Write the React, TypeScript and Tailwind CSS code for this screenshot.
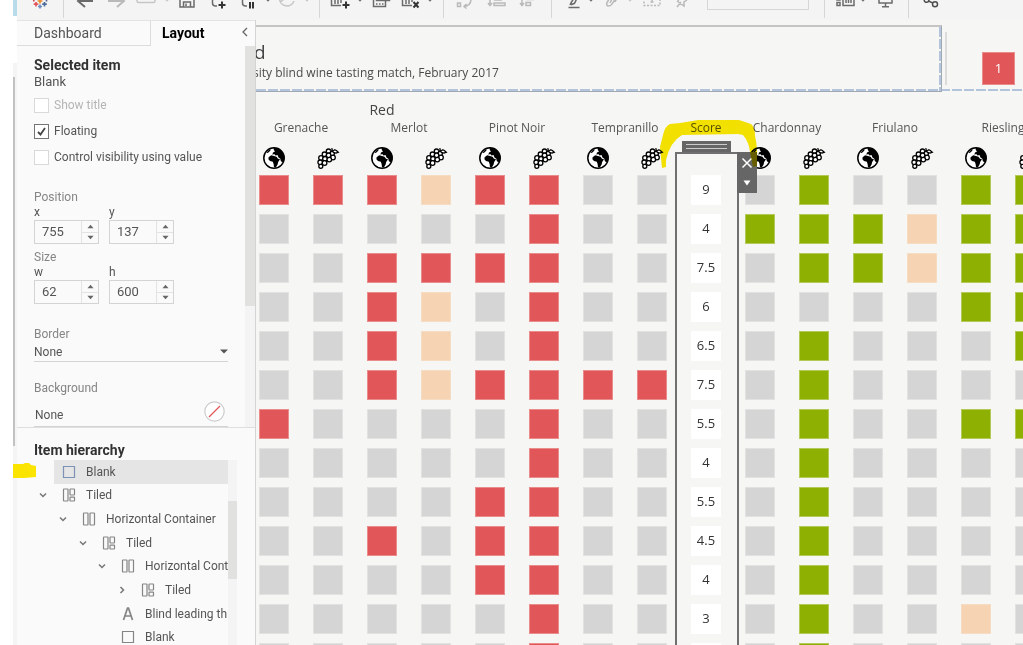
import React from 'react';

const CELL: Record<string, string> = {
  R: 'bg-[#e15759] border-[#ea8b8c]',
  G: 'bg-[#8eb002] border-[#b4ca58]',
  O: 'bg-[#f6d3b2] border-[#f6dcc3]',
  '.': 'bg-[#d5d5d5] border-[#e2e2e1]',
};

const ROWS = [
  { red: 'RRRORR..', score: '9', white: '.G..GG' },
  { red: '.....R..', score: '4', white: 'GGGOGG' },
  { red: '..RRRR..', score: '7.5', white: '.GGOGG' },
  { red: '..RO.R..', score: '6', white: '....GG' },
  { red: '..RO.R..', score: '6.5', white: '.G...G' },
  { red: '..RORRRR', score: '7.5', white: '.G....' },
  { red: 'R....R..', score: '5.5', white: '.G..GG' },
  { red: '.....R..', score: '4', white: '.G....' },
  { red: '....RR..', score: '5.5', white: '.G....' },
  { red: '..R.RR..', score: '4.5', white: '.G....' },
  { red: '....RR..', score: '4', white: '.G....' },
  { red: '.....R..', score: '3', white: '.G..O.' },
  { red: '.....R..', score: '', white: '.G....' },
];

const TREE = [
  { depth: 0, icon: 'blank', label: 'Blank', selected: true },
  { depth: 0, icon: 'tiled', label: 'Tiled', open: true },
  { depth: 1, icon: 'horizontal', label: 'Horizontal Container', open: true },
  { depth: 2, icon: 'tiled', label: 'Tiled', open: true },
  { depth: 3, icon: 'horizontal', label: 'Horizontal Cont', open: true },
  { depth: 4, icon: 'tiled', label: 'Tiled', open: false },
  { depth: 3, icon: 'text', label: 'Blind leading th' },
  { depth: 3, icon: 'blank', label: 'Blank' },
];

const INDENT = ['pl-[22px]', 'pl-[42px]', 'pl-[62px]', 'pl-[81px]', 'pl-[101px]'];

function Globe() {
  return (
    <svg className="mx-auto block" width="24" height="24" viewBox="0 0 24 24" aria-label="Region">
      <circle cx="12" cy="12" r="10.2" fill="#fff" stroke="#000" strokeWidth="1.5" />
      <path d="M11.5 1.800L16 2.500 20 5.500 22.400 10 22.300 14 20.500 16.500 18.800 15 18.300 12.700 16.500 11.500 15.500 9 13.500 9.500 12.200 8 10.300 8.800 11 6.500 13 5.500 11.800 4z" fill="#000" />
      <path d="M6.600 11.300L9.200 9.300 12 10 14.500 10.800 16 12.800 18 13.300 16.200 16 15.600 18.500 13.800 21.500 12 21.200 11.600 18 10.800 15.800 8 15 6.400 13.200z" fill="#000" />
      <path d="M4.500 6.500L7 4l2-.8L8 5 5.800 7z" fill="#000" />
    </svg>
  );
}

function Grapes() {
  return (
    <svg className="mx-auto block" width="24" height="24" viewBox="0 0 24 24" fill="#fff" stroke="#000" strokeWidth="1.3" aria-label="Grape">
      <circle cx="12.500" cy="5.200" r="2.2" />
      <circle cx="8.500" cy="8.300" r="2.3" />
      <circle cx="16.200" cy="7.500" r="2.2" />
      <circle cx="12.600" cy="9.300" r="2.3" />
      <circle cx="5" cy="12" r="2.3" />
      <circle cx="17" cy="11.500" r="2.3" />
      <circle cx="9" cy="12.800" r="2.3" />
      <circle cx="13.300" cy="13.600" r="2.3" />
      <circle cx="4.200" cy="16.300" r="2.3" />
      <circle cx="8.600" cy="17" r="2.3" />
      <circle cx="4.800" cy="20.300" r="2" />
      <path d="M14.500 4.500L16.500 5.500 15.800 2.200M17 5.500q1.500-2.500 3-1.200l2.300 1.900-2.300.9-3-.8" />
    </svg>
  );
}

function Tool({ label, className, children }: { label: string; className: string; children: React.ReactNode }) {
  return (
    <button type="button" aria-label={label} className={`w-5 shrink-0 ${className}`}>
      <svg className="block" width="20" height="20" viewBox="0 0 20 20" fill="none" stroke="currentColor" strokeWidth="1.5">
        {children}
      </svg>
    </button>
  );
}

function Caret({ className }: { className: string }) {
  return (
    <svg className={`block shrink-0 ${className}`} width="6" height="18" viewBox="0 0 6 18" fill="currentColor">
      <path d="M0.500 -1h5L3 1.800z" />
    </svg>
  );
}

function Separator({ className }: { className: string }) {
  return <div className={`h-[18px] w-px shrink-0 bg-[#d6d6d6] ${className}`} />;
}

function Toolbar() {
  return (
    <div className="flex h-5 shrink-0 overflow-hidden bg-[#f4f4f4] text-[#6b6b6b]">
      <svg className="ml-[11px] block shrink-0" width="24" height="18" viewBox="0 0 24 18" fill="none" strokeWidth="1.7">
        <path d="M12 -2v5.500M9.500 1h5" stroke="#eb8a2e" />
        <path d="M8 2v4.500M5.700 4.200h4.600" stroke="#e0565b" />
        <path d="M16.500 2v4.500M14.200 4.200h4.600" stroke="#4d6d9c" />
        <path d="M12 4.500v4M10 6.500h4" stroke="#6c8fc0" />
        <path d="M5.800 -1v2.500" stroke="#d04a5a" />
        <path d="M18.500 -1v2.500" stroke="#5c6692" />
      </svg>
      <Separator className="ml-[11px]" />
      <Tool label="Back" className="ml-[11px]"><path d="M18 1H3M10 7L3 1l7-7" strokeWidth="2" /></Tool>
      <Tool label="Forward" className="ml-3 text-[#b9b9b9]"><path d="M1 1h15M10 7l7-6-7-7" strokeWidth="2" /></Tool>
      <Tool label="Device" className="ml-[9px] text-[#c6c6c6]"><path d="M1 -4v5q0 1.500 1.500 1.500h15Q19 2.500 19 1v-5" /></Tool>
      <Caret className="ml-2 text-[#c6c6c6]" />
      <Tool label="Save" className="ml-[7px]"><path d="M3 -6v13h14V-6M6.500 7V2h7v5M9 3.500V6" /></Tool>
      <Tool label="New data source" className="ml-[11px]">
        <path d="M4.500 -4v7q0 3 3 3h1.500" />
        <path d="M14 1.500v7M10.500 5h7" stroke="#333" strokeWidth="2" />
      </Tool>
      <Tool label="Pause updates" className="ml-2.5">
        <path d="M4.500 -4v7q0 3 3 3h1.500" />
        <path d="M12 2v6.500M15 2v6.500" stroke="#333" strokeWidth="2" />
      </Tool>
      <Caret className="ml-[7px]" />
      <Tool label="Refresh" className="ml-1.5 text-[#c6c6c6]"><path d="M2.500 -1A7.500 7.500 0 0 0 17 1M2 -1.500l1.500 3.500 3-2.500" /></Tool>
      <Caret className="ml-[7px] text-[#c6c6c6]" />
      <Separator className="ml-[9px]" />
      <Tool label="New worksheet" className="ml-2.5">
        <path d="M1.500 -3v8.500H11M5 4V0M8 4V0M11 3V0" />
        <path d="M16 1.500v7M12.500 5h7" stroke="#333" strokeWidth="2" />
      </Tool>
      <Caret className="ml-[7px]" />
      <Tool label="Duplicate" className="ml-2">
        <path d="M5.500 -3v3.500h13v-4M2.500 -1v7.500h12V1" />
        <path d="M5 4h8" strokeDasharray="1.500 1.500" />
      </Tool>
      <Tool label="Clear sheet" className="ml-2.5">
        <path d="M1.500 -3v8.500H11M5 4V0M8 4V0M11 2V0" />
        <path d="M12.500 2l5 5.500M17.500 2l-5 5.500" stroke="#333" strokeWidth="2" />
      </Tool>
      <Caret className="ml-1.5" />
      <Separator className="ml-2.5" />
      <Tool label="Swap" className="ml-[11px] text-[#b9b9b9]"><path d="M2.500 3h3v3.500h-3zM2.500 -1h3M9 6.500c5-.5 7-3 7-7.500M11.500 4L9 6.500l2.500 2" /></Tool>
      <Tool label="Sort ascending" className="ml-3 text-[#b9b9b9]"><path d="M3 -3v8M1 3l2 2.500L5 3M7 0h8M7 3h11v2.500H7z" /></Tool>
      <Tool label="Sort descending" className="ml-2.5 text-[#b9b9b9]"><path d="M5 -3v8M3 3l2 2.500L7 3M9 -.5h8M9 2.500h4.500v3H9z" /></Tool>
      <Separator className="ml-3.5" />
      <Tool label="Highlight" className="ml-3"><path d="M4.500 7.500h11M6 5l1.500-3 4-6M7 4.800l3.500-1.500 3-6" /></Tool>
      <Caret className="ml-1" />
      <Tool label="Group" className="ml-[9px] text-[#b9b9b9]"><path d="M8-4L4 2.500q-1 3.500 1.500 3.500T9 4l4-6M9-1L7 3M12 2l2-4" /></Tool>
      <Caret className="ml-1 text-[#c6c6c6]" />
      <Tool label="Labels" className="ml-[9px] text-[#b9b9b9]"><path d="M2-2v7.500h16V-2" strokeDasharray="2 1.500" /><path d="M10-2v4M8.500 2h3" /></Tool>
      <Tool label="Pin" className="ml-[9px] text-[#b9b9b9]"><path d="M6 7l4-5M6 1l7 5v-4l3-2M9-3L7 1" /></Tool>
      <select aria-label="Fit" className="ml-4 h-2.5 w-[102px] shrink-0 appearance-none border border-t-0 border-[#d6d6d6]" />
      <Separator className="ml-[15px]" />
      <Tool label="Show cards" className="ml-[11px]"><path d="M1-3h3v3H1zM1 2.500h3v3H1zM7-3v8.500h11V-3M10 3v-5M12.500 3v-5M15 3v-5" /></Tool>
      <Caret className="ml-1" />
      <Tool label="Presentation mode" className="ml-[9px]"><path d="M4-3v6h13v-6M10.500 3v3.500M7 6.700h7" /></Tool>
      <Separator className="ml-[13px]" />
      <Tool label="Share" className="ml-3 text-[#4f4f4f]">
        <circle cx="5.500" cy="0" r="2.300" />
        <circle cx="14" cy="4.300" r="2.500" />
        <path d="M7.500 1l4.500 2.200" />
      </Tool>
    </div>
  );
}

function Option({ label, checked, disabled }: { label: string; checked?: boolean; disabled?: boolean }) {
  return (
    <label className={`flex h-[26px] items-center gap-[5px] ${disabled ? 'text-[#b5b5b5]' : ''}`}>
      <span className="relative block size-[15px]">
        <input
          type="checkbox"
          defaultChecked={checked}
          disabled={disabled}
          className="block size-[15px] appearance-none border border-[#d9d9d9] bg-white checked:border-[#757575]"
        />
        {checked && (
          <svg className="pointer-events-none absolute inset-0" width="15" height="15" viewBox="0 0 15 15" fill="none" stroke="#444" strokeWidth="1.8">
            <path d="M4 8l2.500 2.500L11 4" />
          </svg>
        )}
      </span>
      {label}
    </label>
  );
}

function Spinner({ label, value }: { label: string; value: string }) {
  return (
    <label className="block">
      <span className="block h-4 leading-4">{label}</span>
      <span className="flex h-6 w-[65px] border border-[#d4d4d4]">
        <input type="text" defaultValue={value} className="w-[46px] min-w-0 pl-[7px] text-[13px] outline-none" />
        <span className="flex flex-1 flex-col border-l border-[#e3e3e3]">
          <button type="button" aria-label={`Increase ${label}`} className="flex flex-1 items-center justify-center border-b border-[#e3e3e3]">
            <svg width="7" height="5" viewBox="0 0 8 5" fill="#666"><path d="M0.500 4.500h7L4 .500z" /></svg>
          </button>
          <button type="button" aria-label={`Decrease ${label}`} className="flex flex-1 items-center justify-center">
            <svg width="7" height="5" viewBox="0 0 8 5" fill="#666"><path d="M0.500 .500h7L4 4.500z" /></svg>
          </button>
        </span>
      </span>
    </label>
  );
}

function ItemIcon({ kind, selected }: { kind: string; selected?: boolean }) {
  return (
    <svg className="shrink-0" width="14" height="14" viewBox="0 0 14 14" fill="none" stroke={selected ? '#7d93b5' : '#858585'} strokeWidth="1.2">
      {kind === 'blank' && <path d="M1.500 1.500h11v11h-11z" />}
      {kind === 'tiled' && (
        <>
          <rect x="1.500" y="1" width="4.500" height="12" rx=".5" />
          <rect x="8" y="1" width="4.500" height="6" rx=".5" />
          <rect x="8" y="9.200" width="4.500" height="3.800" rx=".5" />
        </>
      )}
      {kind === 'horizontal' && (
        <>
          <rect x="1.500" y="1" width="4.500" height="12" rx=".5" />
          <rect x="8" y="1" width="4.500" height="12" rx=".5" />
        </>
      )}
      {kind === 'text' && <path d="M2.500 13L6.500 1.200h1l4 11.800M4 9h6" strokeWidth="1.700" />}
    </svg>
  );
}

function Sidebar() {
  return (
    <aside className="flex w-[239px] shrink-0 flex-col border-r border-[#d4d4d4] bg-[#fafafa] font-['Roboto','Liberation_Sans',sans-serif] text-[12px] text-[#555]">
      <div className="flex h-[26px] shrink-0 border-t border-[#e3e3e3]">
        <button type="button" className="w-[134px] border-r border-b border-[#dcdcdc] pl-[17px] text-left text-[14px]">Dashboard</button>
        <button type="button" className="flex-1 pl-[11px] text-left text-[14px] font-bold text-black">Layout</button>
        <button type="button" aria-label="Collapse" className="pr-1.5 pb-1">
          <svg width="8" height="12" viewBox="0 0 8 12" fill="none" stroke="#666" strokeWidth="1.300"><path d="M6 2L2 6l4 4" /></svg>
        </button>
      </div>

      <div className="flex h-[382px] shrink-0 border-b border-[#dedede]">
        <div className="min-w-0 flex-1 px-[17px] pt-[11px]">
          <h2 className="h-4 text-[14px] leading-4 font-bold text-[#333]">Selected item</h2>
          <p className="h-[19px] text-[13px] leading-[18px]">Blank</p>
          <Option label="Show title" disabled />
          <Option label="Floating" checked />
          <Option label="Control visibility using value" />

          <p className="mt-[19px] h-[15px] leading-4 text-[#858585]">Position</p>
          <div className="flex gap-2.5">
            <Spinner label="x" value="755" />
            <Spinner label="y" value="137" />
          </div>
          <p className="mt-[5px] h-[15px] leading-4 text-[#858585]">Size</p>
          <div className="flex gap-2.5">
            <Spinner label="w" value="62" />
            <Spinner label="h" value="600" />
          </div>

          <label htmlFor="border" className="mt-[22px] block h-4 leading-4 text-[#858585]">Border</label>
          <div className="relative">
            <select id="border" className="block h-5 w-full appearance-none border-b border-[#d4d4d4]">
              <option>None</option>
            </select>
            <svg className="pointer-events-none absolute top-[7px] right-0" width="8" height="5" viewBox="0 0 8 5" fill="#555"><path d="M0 .500h8L4 4.500z" /></svg>
          </div>
          <p className="mt-[18px] h-4 leading-4 text-[#858585]">Background</p>
          <button type="button" className="mt-px flex h-[30px] w-full items-center justify-between border-b border-[#d4d4d4] pr-[3px] pl-px">
            <span className="pt-1.5">None</span>
            <svg width="21" height="21" viewBox="0 0 21 21" fill="#fff"><circle cx="10.500" cy="10.500" r="9.700" stroke="#ccc" strokeWidth="1.200" /><path d="M5 16L16 5" stroke="#e15759" strokeWidth="1.300" /></svg>
          </button>
        </div>
        <div className="w-2.5 bg-[#f4f4f4]">
          <div className="h-[260px] bg-[#e1e1df]" />
        </div>
      </div>

      <h2 className="h-8 shrink-0 pt-3.5 pl-[17px] text-[14px] leading-4 font-bold text-[#333]">Item hierarchy</h2>
      <div className="flex min-h-0 flex-1 overflow-hidden">
        <ul className="grid h-[189px] w-[211px] auto-rows-fr overflow-hidden">
          {TREE.map((item, i) => (
            <li key={i} className={`flex items-center whitespace-nowrap ${INDENT[item.depth]}`}>
              {item.open === undefined ? (
                <span className={`shrink-0 ${item.selected ? 'w-[15px]' : 'w-2'}`} />
              ) : (
                <svg className="shrink-0" width="8" height="8" viewBox="0 0 8 8" fill="none" stroke="#777" strokeWidth="1.500">
                  <path d={item.open ? 'M1 2.500l3 3 3-3' : 'M2.500 1l3 3-3 3'} />
                </svg>
              )}
              <span className={item.selected ? 'flex h-full flex-1 items-center gap-[10px] bg-[#e5e5e5] pl-2' : 'flex items-center gap-[10px] pl-[15px]'}>
                <ItemIcon kind={item.icon} selected={item.selected} />
                {item.label}
              </span>
            </li>
          ))}
        </ul>
        <div className="w-[9px] bg-[#f4f4f4] pt-[41px]">
          <div className="h-[78px] bg-[#e1e1df]" />
        </div>
      </div>
    </aside>
  );
}

function Cell({ code }: { code: string }) {
  return (
    <td className="p-0 align-middle">
      <div className={`mx-auto size-[30px] border ${CELL[code]}`} />
    </td>
  );
}

function ScoreTable() {
  const grapes = ['Grenache', 'Merlot', 'Pinot Noir', 'Tempranillo', 'Score', 'Chardonnay', 'Friulano', 'Riesling'];
  return (
    <div className="relative -ml-[9px] w-[810px] shrink-0">
      <table className="w-full table-fixed border-collapse text-[13px] text-[#333]">
        <colgroup>
          {Array.from({ length: 15 }, (_, i) => <col key={i} />)}
        </colgroup>
        <thead className="text-[12px] text-[#555]">
          <tr className="h-[27px]">
            <th colSpan={5} className="p-0 pt-2 text-[14px] leading-[19px] font-medium text-[#444]">Red</th>
            <th colSpan={10} />
          </tr>
          <tr className="h-[17px]">
            {grapes.map((name) => (
              <th key={name} colSpan={name === 'Score' ? 1 : 2} className="p-0 leading-4 font-normal">{name}</th>
            ))}
          </tr>
          <tr className="h-[34px]">
            {Array.from({ length: 15 }, (_, i) => (
              <td key={i} className="p-0 pt-2.5">{i === 8 ? null : (i < 8 ? i : i - 1) % 2 ? <Grapes /> : <Globe />}</td>
            ))}
          </tr>
        </thead>
        <tbody>
          {ROWS.map((row, i) => (
            <tr key={i} className="h-[39px]">
              {row.red.split('').map((c, n) => <Cell key={n} code={c} />)}
              <td className="p-0">
                <div className="mx-auto flex size-[30px] items-center justify-center bg-white">{row.score}</div>
              </td>
              {row.white.split('').map((c, n) => <Cell key={n} code={c} />)}
            </tr>
          ))}
        </tbody>
      </table>

      {/* floating blank object with its grip and side menu */}
      <div className="absolute top-[60px] left-[428px] h-[600px] w-[64px] border-2 border-[#707070]">
        <div className="absolute -top-[13px] left-[5px] flex h-[11px] w-[49px] flex-col justify-center gap-[3px] bg-[#666] px-1">
          <span className="h-px bg-[#ccc]" />
          <span className="h-px bg-[#ccc]" />
        </div>
        <div className="absolute -top-0.5 left-[60px] flex h-[41px] w-5 flex-col items-center bg-[#666] text-white">
          <button type="button" aria-label="Remove" className="flex h-[21px] items-center">
            <svg width="12" height="12" viewBox="0 0 12 12" stroke="#fff" strokeWidth="1.500"><path d="M1.500 1.500l9 9M10.500 1.500l-9 9" /></svg>
          </button>
          <button type="button" aria-label="More options" className="flex h-5 items-center">
            <svg width="8" height="6" viewBox="0 0 8 6" fill="#fff"><path d="M.500 .500h7L4 5.500z" /></svg>
          </button>
        </div>
      </div>
      <svg className="pointer-events-none absolute top-[26px] left-[411px] mix-blend-multiply" width="104" height="52" viewBox="0 0 104 52" fill="#fbe900">
        <path d="M4 50L8 49L8 42Q12 24 24 17L80 16L85 17Q91 24 92 34L95 49L99 48Q100 30 97 18Q97 9 93 6L81 2L40 2Q28 4 22 5L12 6Q7 8 5 17L2 29Z" />
      </svg>
    </div>
  );
}

function Dashboard() {
  return (
    <main className="flex min-w-0 flex-1 flex-col overflow-hidden bg-[#f6f6f4] pt-[5px] font-['Open_Sans','Noto_Sans',sans-serif]">
      <div className="flex h-[66px] shrink-0">
        <div className="relative min-w-0 flex-1 border-t-2 border-r border-t-[#c5c5c3] border-r-[#a0a8b3] whitespace-nowrap text-[#444]">
          <h1 className="-ml-0.5 pt-[11px] text-[19px] leading-7">d</h1>
          <p className="-ml-[3px] text-[12px] leading-[14px] text-[#4b4b4b]">sity blind wine tasting match, February 2017</p>
          <div className="absolute top-0 right-0 h-full w-0.5 bg-[repeating-linear-gradient(to_bottom,#b3c5dd_0_10px,#f6f6f4_10px_12px)]" />
        </div>
        <div className="ml-[3px] flex w-[78px] shrink-0 items-end pb-1.5">
          <div className="h-[53px] w-0.5 bg-[#dcdcdc]" />
          <div className="ml-[35px] flex size-[33px] items-center justify-center border border-[#ea8b8c] bg-[#e15759] text-[13px] text-white">1</div>
        </div>
      </div>
      <div className="-mt-[2px] h-0.5 shrink-0 bg-[repeating-linear-gradient(to_right,#b3c5dd_0_10px,#f6f6f4_10px_12px)]" />
      <div className="mr-[81px] h-px shrink-0 bg-[#a0a8b3]" />
      <ScoreTable />
    </main>
  );
}

export default function App() {
  return (
    <div className="flex h-screen overflow-hidden bg-white">
      {/* window edge */}
      <div className="relative ml-[13px] flex w-1 shrink-0 flex-col bg-[#f4f4f4]">
        <div className="h-4 bg-[#b9dcea]" />
        <div className="h-[47px] bg-white" />
        <div className="h-3.5" />
        <div className="h-[369px] w-0.5 bg-[#c2c2c2]" />
        <svg className="absolute top-[463px] left-0 z-10" width="23" height="16" viewBox="0 0 23 16" fill="#fbe500">
          <path d="M0 1h10l2-1h4l2 2 5 1v11l-12 1H0z" />
        </svg>
      </div>
      <div className="flex min-w-0 flex-1 flex-col">
        <Toolbar />
        <div className="flex min-h-0 flex-1">
          <Sidebar />
          <Dashboard />
        </div>
      </div>
    </div>
  );
}
